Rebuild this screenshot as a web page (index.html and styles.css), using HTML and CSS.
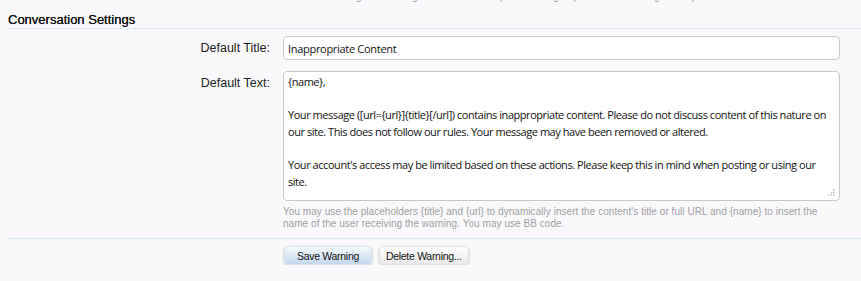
FILE: index.html
```html
<!DOCTYPE html>
<html lang="en">
  <head>
    <meta charset="UTF-8" />
    <title>Conversation Settings</title>
    <link rel="stylesheet" href="styles.css">
  </head>
  <body>
    <form class="warning-form">
      <p class="prev-hint">Those receiving this warning can be added to specific user groups until the warning has expired.</p>
      <h3 class="text-heading">Conversation Settings</h3>

      <dl class="ctrl-unit first">
        <dt><label for="ctrl_title">Default Title:</label></dt>
        <dd>
          <input type="text" id="ctrl_title" class="text-ctrl" value="Inappropriate Content" />
        </dd>
      </dl>

      <dl class="ctrl-unit">
        <dt><label for="ctrl_text">Default Text:</label></dt>
        <dd>
          <div class="area-wrap">
            <textarea id="ctrl_text" class="text-ctrl area">{name},

Your message ([url={url}]{title}[/url]) contains inappropriate content. Please do not discuss content of this nature on our site. This does not follow our rules. Your message may have been removed or altered.

Your account's access may be limited based on these actions. Please keep this in mind when posting or using our site.</textarea>
            <svg class="grip" width="7" height="7" viewBox="0 0 7 7" fill="#b5b5b5">
              <circle cx="6" cy="1" r="0.8" />
              <circle cx="6" cy="3.5" r="0.8" />
              <circle cx="3.5" cy="3.5" r="0.8" />
              <circle cx="6" cy="6" r="0.8" />
              <circle cx="3.5" cy="6" r="0.8" />
              <circle cx="1" cy="6" r="0.8" />
            </svg>
          </div>
          <p class="explain">You may use the placeholders {title} and {url} to dynamically insert the content's title or full URL and {name} to insert the name of the user receiving the warning. You may use BB code.</p>
        </dd>
      </dl>

      <div class="submit-unit">
        <button type="button" class="button primary">Save Warning</button>
        <button type="button" class="button">Delete Warning...</button>
      </div>
    </form>
  </body>
</html>
```

FILE: styles.css
```css
html {
  box-sizing: border-box;
}
*,
*::after,
*::before {
  box-sizing: inherit;
}

body {
  margin: 0;
  background-color: #f9f9fc;
  color: #222;
  font-family: 'Liberation Sans', Arial, sans-serif;
  font-size: 12.5px;
  overflow: hidden;
}

.warning-form {
  padding-left: 8px;
}

.prev-hint {
  margin: -9px 0 0 283px;
  height: 12px;
  font-size: 10px;
  line-height: 12px;
  color: #999;
  overflow: hidden;
}

.text-heading {
  margin: 0;
  padding: 9px 0 1px;
  font-size: 13px;
  font-weight: normal;
  color: #111;
  text-shadow: 0 0 0.5px #111;
  border-bottom: 1px solid #d7e9f3;
}

.ctrl-unit {
  display: grid;
  grid-template-columns: 262px 1fr;
  column-gap: 13px;
  margin: 0;
  padding: 11px 21px 0 0;
}

.ctrl-unit.first {
  padding-top: 7px;
}

.ctrl-unit dt {
  text-align: right;
  padding-top: 5px;
  color: #222;
}

.ctrl-unit dd {
  margin: 0;
}

.text-ctrl {
  display: block;
  width: 100%;
  height: 24px;
  padding: 3px 4px;
  border: 1px solid #c8c8c8;
  border-radius: 4px;
  background: #fff;
  color: #111;
  font-family: 'Open Sans', sans-serif;
  font-size: 11px;
  letter-spacing: -0.3px;
}

.area-wrap {
  position: relative;
}

.text-ctrl.area {
  height: 130px;
  line-height: 16.6px;
  padding: 2px 4px;
  letter-spacing: -0.45px;
  resize: none;
}

.grip {
  position: absolute;
  right: 5px;
  bottom: 5px;
}

.explain {
  margin: 5px 0 0;
  font-size: 10px;
  letter-spacing: 0.05px;
  line-height: 12px;
  color: #a0a0a0;
}

.submit-unit {
  margin-top: 8px;
  padding: 7px 0 0 276px;
  border-top: 1px solid #d7e9f3;
  display: flex;
  gap: 7px;
}

.button {
  height: 19px;
  padding: 0 6px;
  border: 1px solid #e4e4e4;
  border-radius: 5px;
  background: linear-gradient(#fff, #e9e9e9);
  box-shadow: 0 1px 3px rgba(0, 0, 0, 0.25);
  color: #111;
  font-family: 'Liberation Sans', Arial, sans-serif;
  font-size: 10.5px;
  letter-spacing: -0.3px;
}

.button.primary {
  padding: 0 12px;
  border-color: #d9e6f2;
  background: linear-gradient(#f4f8fc, #c3d8ee);
}
```
